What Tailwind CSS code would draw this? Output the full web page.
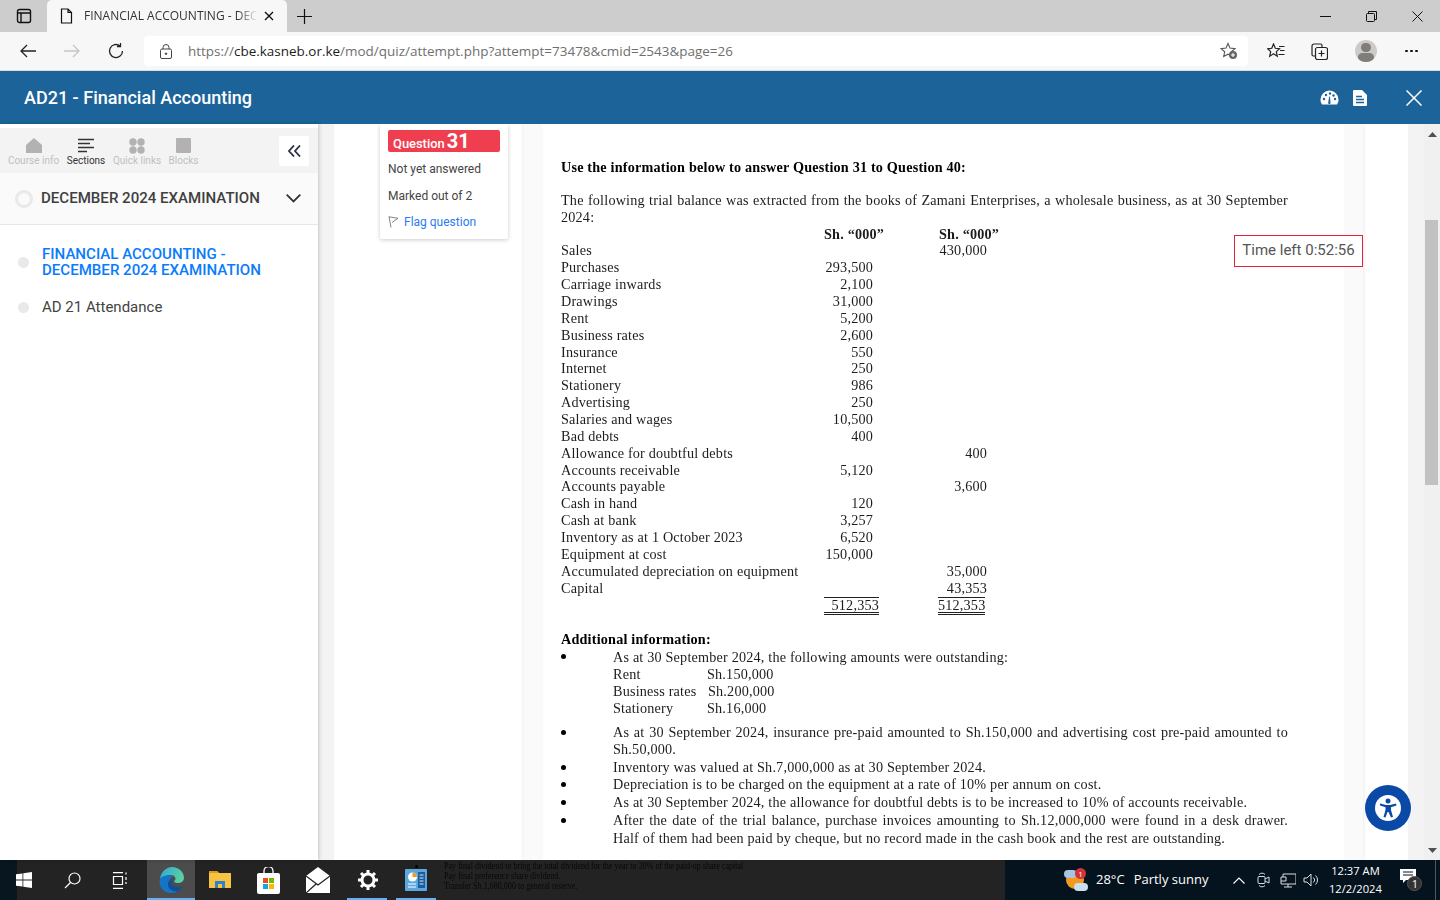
<!DOCTYPE html>
<html><head><meta charset="utf-8"><script src="https://cdn.jsdelivr.net/npm/@tailwindcss/browser@4"></script></head>
<body class="w-[1440px] h-[900px] overflow-hidden bg-white font-['Roboto',sans-serif]">
<div class="relative flex flex-col w-[1440px] h-[900px] overflow-hidden">

<!-- tab strip -->
<div class="flex items-end h-[32px] bg-[#cdcdcd] shrink-0">
  <div class="w-[47px] h-full flex items-center justify-center">
    <svg width="16" height="16" viewBox="0 0 16 16" fill="none" stroke="#111" stroke-width="1.4"><rect x="1.5" y="1.5" width="13" height="13" rx="2"/><path d="M1.5 5h13M5 5v9.5" /></svg>
  </div>
  <div class="w-[240px] h-[32px] bg-[#f7f7f7] rounded-t-[5px] flex items-center pl-[13px]">
    <svg width="13" height="16" viewBox="0 0 13 16" fill="none" stroke="#111" stroke-width="1.2"><path d="M1.5 1h6.5l3.5 3.5V15h-10zM8 1v3.5h3.5"/></svg>
    <span class="ml-[11px] w-[174px] whitespace-nowrap text-[12px] text-[#333] font-['Open_Sans',sans-serif] [mask-image:linear-gradient(to_right,black_88%,transparent)]">FINANCIAL ACCOUNTING - DECE</span>
    <svg class="ml-[6px]" width="10" height="10" viewBox="0 0 10 10" stroke="#111" stroke-width="1.4"><path d="M1 1l8 8M9 1l-8 8"/></svg>
  </div>
  <div class="w-[34px] h-full flex items-center justify-center">
    <svg width="15" height="15" viewBox="0 0 15 15" stroke="#111" stroke-width="1.2"><path d="M7.5 0v15M0 7.5h15"/></svg>
  </div>
  <div class="flex-1"></div>
  <div class="flex h-full items-center pr-[17px] gap-[35px]">
    <svg width="11" height="11" viewBox="0 0 11 11" stroke="#111" stroke-width="1"><path d="M0 5.5h11"/></svg>
    <svg width="11" height="11" viewBox="0 0 11 11" fill="none" stroke="#111" stroke-width="1"><rect x="0.5" y="2.5" width="8" height="8" rx="1"/><path d="M2.5 2.5V.5h8v8h-2"/></svg>
    <svg width="11" height="11" viewBox="0 0 11 11" stroke="#111" stroke-width="1"><path d="M.5.5l10 10M10.5.5l-10 10"/></svg>
  </div>
</div>

<!-- toolbar -->
<div class="flex items-center h-[39px] bg-[#f7f7f7] border-b border-[#dcdcdc] shrink-0">
  <div class="w-[144px] flex items-center pl-[20px] gap-[28px]">
    <svg width="16" height="14" viewBox="0 0 16 14" fill="none" stroke="#222" stroke-width="1.3"><path d="M16 7H1M7 1L1 7l6 6"/></svg>
    <svg width="16" height="14" viewBox="0 0 16 14" fill="none" stroke="#c6c6c6" stroke-width="1.3"><path d="M0 7h15M9 1l6 6-6 6"/></svg>
    <svg width="16" height="16" viewBox="0 0 16 16" fill="none" stroke="#222" stroke-width="1.3"><path d="M14.5 8A6.5 6.5 0 1 1 12 2.9M12.5 0v3.5H9"/></svg>
  </div>
  <div class="w-[1104px] h-[30px] bg-white rounded-[4px] flex items-center pl-[16px] pr-[10px]">
    <svg width="12" height="15" viewBox="0 0 12 15" fill="none" stroke="#444" stroke-width="1"><rect x="0.5" y="5" width="11" height="9.5" rx="1.5"/><path d="M3 5V3.5a3 3 0 0 1 6 0V5"/><circle cx="6" cy="9.7" r="0.8" fill="#444"/></svg>
    <span class="ml-[16px] text-[13.48px] text-[#6f6f6f] font-['Open_Sans',sans-serif] whitespace-nowrap">https://<span class="text-[#1c1c1c]">cbe.kasneb.or.ke</span>/mod/quiz/attempt.php?attempt=73478&amp;cmid=2543&amp;page=26</span>
    <div class="flex-1"></div>
    <svg width="18" height="18" viewBox="0 0 18 18"><path d="M8 1.5l2 4.6 5 .5-3.7 3.2 1 4.7L8 12.2l-4.3 2.3 1-4.7L1 6.600l5-.5z" fill="none" stroke="#555" stroke-width="1.1"/><circle cx="13" cy="13" r="4" fill="#666"/><path d="M13 11v4M11 13h4" stroke="#fff" stroke-width="1.1"/></svg>
  </div>
  <div class="flex-1 flex items-center pl-[19px]">
    <svg width="18" height="17" viewBox="0 0 18 17" fill="none" stroke="#222" stroke-width="1.2"><path d="M6.500 1l1.800 4.300 4.200.4-3.200 2.900 1 4.700-3.800-2.500L2.700 13.300l1-4.700L.6 5.700l4.200-.4zM12 3.500h5.500M13 7.500h4.500M11.500 11.500h6"/></svg>
    <svg class="ml-[26px]" width="17" height="17" viewBox="0 0 17 17" fill="none" stroke="#222" stroke-width="1.2"><path d="M4 13H2.500A1.500 1.500 0 0 1 1 11.500V3a2 2 0 0 1 2-2h6.500A1.500 1.500 0 0 1 11 2.500V4"/><rect x="4.500" y="4.500" width="12" height="12" rx="2"/><path d="M10.500 7.500v6M7.500 10.500h6"/></svg>
    <div class="ml-[27px] w-[22px] h-[22px] rounded-full bg-[#cdcbc8] overflow-hidden flex flex-col items-center">
      <div class="mt-[3px] w-[10px] h-[10px] rounded-full bg-[#807d7a]"></div>
      <div class="mt-[1px] w-[16px] h-[10px] rounded-full bg-[#807d7a]"></div>
    </div>
    <div class="ml-[28px] flex gap-[2.500px]"><span class="w-[2.500px] h-[2.500px] rounded-full bg-[#111]"></span><span class="w-[2.500px] h-[2.500px] rounded-full bg-[#111]"></span><span class="w-[2.500px] h-[2.500px] rounded-full bg-[#111]"></span></div>
  </div>
</div>

<!-- app header -->
<div class="flex items-center h-[53px] bg-[#1b6399] shrink-0 pl-[24px] pr-[18px]">
  <div class="text-[18px] font-medium text-white">AD21 - Financial Accounting</div>
  <div class="flex-1"></div>
  <svg width="19" height="15" viewBox="0 0 19 15"><path d="M9.500 0.500A9 9 0 0 0 .5 9.500c0 2 .5 3.500 1.500 5h15c1-1.500 1.500-3 1.500-5a9 9 0 0 0-9-9z" fill="#fff"/><g fill="#1b6399"><circle cx="4" cy="9" r="1.200"/><circle cx="6" cy="5" r="1.200"/><circle cx="10" cy="3.500" r="1.200"/><circle cx="15" cy="9" r="1.200"/><circle cx="13.500" cy="5.500" r="1.200"/><path d="M8.200 12.500l1-6h.8l.5 6a1.200 1.200 0 1 1-2.300 0z"/></g></svg>
  <svg class="ml-[14px]" width="14" height="16" viewBox="0 0 14 16"><path d="M1 0h8l5 5v10a1 1 0 0 1-1 1H1a1 1 0 0 1-1-1V1a1 1 0 0 1 1-1z" fill="#fff"/><path d="M3 6.500h6M3 9.500h8M3 12.500h8" stroke="#1b6399" stroke-width="1.500"/></svg>
  <svg class="ml-[39px]" width="16" height="16" viewBox="0 0 16 16" stroke="#fff" stroke-width="1.500"><path d="M.5.5l15 15M15.500.5l-15 15"/></svg>
</div>

<!-- main -->
<div class="flex flex-1 min-h-0 bg-white">
  <!-- sidebar -->
  <aside class="w-[318px] shrink-0 bg-white flex flex-col pt-[4px] shadow-[1px_0_4px_rgba(0,0,0,0.2)] z-10">
    <div class="h-[45px] bg-[#f3f3f3] flex items-start relative pt-[10px] pl-[8px] text-[10px] leading-[12px] text-[#c0bfbf] shrink-0">
      <div class="w-[51px] flex flex-col items-center">
        <svg width="16" height="15" viewBox="0 0 16 15"><path d="M8 0L0 7v8h16V7z" fill="#b3b1b2"/></svg>
        <span class="mt-[2px] whitespace-nowrap">Course info</span>
      </div>
      <div class="ml-[8px] w-[38px] flex flex-col items-center text-[#333]">
        <svg width="16" height="15" viewBox="0 0 16 15" stroke="#333" stroke-width="1.600"><path d="M0 1.500h16M0 5.500h12M0 9.500h16M0 13.500h9"/></svg>
        <span class="mt-[2px] whitespace-nowrap">Sections</span>
      </div>
      <div class="ml-[8px] w-[48px] flex flex-col items-center">
        <svg width="16" height="16" viewBox="0 0 16 16" fill="#b3b1b2"><circle cx="4" cy="4" r="3.700"/><circle cx="12" cy="4" r="3.700"/><circle cx="4" cy="12" r="3.700"/><circle cx="12" cy="12" r="3.700"/></svg>
        <span class="mt-[1px] whitespace-nowrap">Quick links</span>
      </div>
      <div class="ml-[8px] w-[29px] flex flex-col items-center">
        <div class="w-[15px] h-[15px] bg-[#b3b1b2] rounded-[1px]"></div>
        <span class="mt-[2px] whitespace-nowrap">Blocks</span>
      </div>
      <div class="absolute left-[279px] top-[8px] w-[30px] h-[30px] bg-white rounded-[2px] flex items-center justify-center">
        <svg width="13" height="12" viewBox="0 0 13 12" fill="none" stroke="#2a3142" stroke-width="1.800"><path d="M6 .5L1 6l5 5.500M12 .5L7 6l5 5.500"/></svg>
      </div>
    </div>
    <div class="h-[52px] bg-[#fafafa] border-b border-[#e6e6e6] flex items-center pl-[15px] shrink-0">
      <span class="w-[18px] h-[18px] rounded-full border-[3px] border-[#e9e9e9]"></span>
      <span class="ml-[8px] text-[15.07px] font-medium text-[#3f3f3f] whitespace-nowrap">DECEMBER 2024 EXAMINATION</span>
      <svg class="ml-[26px]" width="15" height="9" viewBox="0 0 15 9" fill="none" stroke="#333" stroke-width="1.800"><path d="M.7.7l6.800 6.800L14.300.7"/></svg>
    </div>
    <div class="pt-[21px]">
      <div class="flex items-center pl-[18px]">
        <span class="w-[11px] h-[11px] rounded-full bg-[#e9e9e9]"></span>
        <span class="ml-[13px] text-[15.07px] leading-[16px] font-medium text-[#0a7cfb]">FINANCIAL ACCOUNTING -<br>DECEMBER 2024 EXAMINATION</span>
      </div>
      <div class="flex items-center pl-[18px] mt-[20px]">
        <span class="w-[11px] h-[11px] rounded-full bg-[#e9e9e9]"></span>
        <span class="ml-[13px] text-[15px] leading-[18px] text-[#444]">AD 21 Attendance</span>
      </div>
    </div>
  </aside>
  <div class="w-[16px] shrink-0 bg-[#f3f3f3]"></div>

  <!-- content -->
  <div class="relative flex-1 flex min-w-0 bg-white pl-[46px] overflow-hidden">
    <div class="w-[128px] h-[115px] shrink-0 bg-white shadow-[0_1px_4px_rgba(0,0,0,0.2)] rounded-b-[2px] px-[8px] pt-[6px]">
      <div class="h-[22px] bg-[#ef3e50] rounded-[2px] pl-[5px] flex items-center text-white font-medium">
        <span class="text-[12.9px] mt-[5px]">Question</span><span class="ml-[2px] text-[20px] leading-[20px] font-bold">31</span>
      </div>
      <div class="mt-[9px] text-[12px] leading-[16px] text-[#444]">Not yet answered</div>
      <div class="mt-[11px] text-[12px] leading-[16px] text-[#444]">Marked out of 2</div>
      <div class="mt-[10px] text-[12px] leading-[16px] text-[#2a7bf0] flex items-center">
        <svg width="11" height="12" viewBox="0 0 11 12" fill="none" stroke="#777" stroke-width="0.900"><path d="M1 .5l2 11M1 .8l9 1.500-6 4.200"/></svg>
        <span class="ml-[5px]">Flag question</span>
      </div>
    </div>

    <div class="ml-[16px] w-[839px] h-full shrink-0 bg-[#fafafa] shadow-[0_0_4px_rgba(0,0,0,0.12)] px-[19px]">
      <div class="h-full bg-white pl-[18px] pt-[35px] font-['Liberation_Serif',serif] text-[14.200px] leading-[16.860px] text-[#1c1c1c] blur-[0.35px] tracking-[0.19px] overflow-hidden">
        <div class="font-bold text-black">Use the information below to answer Question 31 to Question 40:</div>
        <div class="mt-[16px] w-[727px] text-justify">The following trial balance was extracted from the books of Zamani Enterprises, a wholesale business, as at 30 September 2024:</div>
        <div class="flex font-bold"><span class="ml-[263px] w-[115px]">Sh. “000”</span><span>Sh. “000”</span></div>
        <div class="grid grid-cols-[263px_49px_126px] [&>div:nth-child(3n+2)]:text-right [&>div:nth-child(3n)]:text-right [&>div]:whitespace-nowrap">
          <div>Sales</div><div></div><div class="pr-[12px]">430,000</div>
          <div>Purchases</div><div>293,500</div><div></div>
          <div>Carriage inwards</div><div>2,100</div><div></div>
          <div>Drawings</div><div>31,000</div><div></div>
          <div>Rent</div><div>5,200</div><div></div>
          <div>Business rates</div><div>2,600</div><div></div>
          <div>Insurance</div><div>550</div><div></div>
          <div>Internet</div><div>250</div><div></div>
          <div>Stationery</div><div>986</div><div></div>
          <div>Advertising</div><div>250</div><div></div>
          <div>Salaries and wages</div><div>10,500</div><div></div>
          <div>Bad debts</div><div>400</div><div></div>
          <div>Allowance for doubtful debts</div><div></div><div class="pr-[12px]">400</div>
          <div>Accounts receivable</div><div>5,120</div><div></div>
          <div>Accounts payable</div><div></div><div class="pr-[12px]">3,600</div>
          <div>Cash in hand</div><div>120</div><div></div>
          <div>Cash at bank</div><div>3,257</div><div></div>
          <div>Inventory as at 1 October 2023</div><div>6,520</div><div></div>
          <div>Equipment at cost</div><div>150,000</div><div></div>
          <div>Accumulated depreciation on equipment</div><div></div><div class="pr-[12px]">35,000</div>
          <div>Capital</div><div></div><div class="pr-[12px]">43,353</div>
        </div>
        <div class="flex h-[17px] mt-[1px]">
          <div class="ml-[263px] w-[55px] border-t border-[#222] border-b-[3px] border-double text-right leading-[14px] box-border h-[18px]">512,353</div>
          <div class="ml-[59px] w-[47px] border-t border-[#222] border-b-[3px] border-double text-right leading-[14px] box-border h-[18px]">512,353</div>
        </div>
        <div class="mt-[17px] font-bold text-black">Additional information:</div>
        <div class="relative pl-[52px] mt-[1px]">
          <span class="absolute left-0 top-[5px] w-[5px] h-[5px] rounded-full bg-black"></span>
          <div>As at 30 September 2024, the following amounts were outstanding:</div>
          <div class="flex"><span class="w-[94px]">Rent</span><span>Sh.150,000</span></div>
          <div class="flex"><span class="w-[95px]">Business rates</span><span>Sh.200,000</span></div>
          <div class="flex"><span class="w-[94px]">Stationery</span><span>Sh.16,000</span></div>
        </div>
        <div class="relative pl-[52px] mt-[7px] w-[727px] text-justify">
          <span class="absolute left-0 top-[6px] w-[5px] h-[5px] rounded-full bg-black"></span>
          As at 30 September 2024, insurance pre-paid amounted to Sh.150,000 and advertising cost pre-paid amounted to Sh.50,000.
        </div>
        <div class="relative pl-[52px] mt-[1px]"><span class="absolute left-0 top-[6px] w-[5px] h-[5px] rounded-full bg-black"></span>Inventory was valued at Sh.7,000,000 as at 30 September 2024.</div>
        <div class="relative pl-[52px] mt-[1px]"><span class="absolute left-0 top-[6px] w-[5px] h-[5px] rounded-full bg-black"></span>Depreciation is to be charged on the equipment at a rate of 10% per annum on cost.</div>
        <div class="relative pl-[52px] mt-[1px]"><span class="absolute left-0 top-[6px] w-[5px] h-[5px] rounded-full bg-black"></span>As at 30 September 2024, the allowance for doubtful debts is to be increased to 10% of accounts receivable.</div>
        <div class="relative pl-[52px] mt-[1px] w-[727px] text-justify leading-[17.8px]"><span class="absolute left-0 top-[6px] w-[5px] h-[5px] rounded-full bg-black"></span>After the date of the trial balance, purchase invoices amounting to Sh.12,000,000 were found in a desk drawer. Half of them had been paid by cheque, but no record made in the cash book and the rest are outstanding.</div>
      </div>
    </div>
    <div class="w-[45px] shrink-0"></div>
    <div class="w-[16px] shrink-0 bg-[#f3f3f3]"></div>

    <!-- overlays -->
    <div class="absolute left-[900px] top-[111px] w-[129px] h-[32px] pb-[2px] bg-white border border-[#e0233f] flex items-center justify-center text-[15px] text-[#555] whitespace-nowrap">Time left 0:52:56</div>
    <div class="absolute left-[1031px] top-[661px] w-[46px] h-[46px] rounded-full bg-[#0a4aa6] flex items-center justify-center shadow-[0_0_2px_rgba(255,255,255,0.8)]">
      <div class="w-[26px] h-[26px] rounded-full bg-white flex items-center justify-center">
        <svg width="18" height="20" viewBox="0 0 18 20" fill="#0a4aa6"><circle cx="9" cy="3" r="2.500"/><path d="M1 5.500l6 1.500h4l6-1.500.5 2-5.500 1.700V12l2 7-2 .6L9.500 14h-1L6.500 19.600l-2-.6 2-7V9.200L1 7.500z"/></svg>
      </div>
    </div>
  </div>

  <!-- scrollbar -->
  <div class="w-[16px] shrink-0 bg-[#f0f0f0] flex flex-col items-center relative">
    <svg class="mt-[8px]" width="9" height="5" viewBox="0 0 9 5" fill="#505050"><path d="M4.500 0L9 5H0z"/></svg>
    <div class="absolute left-[1px] top-[96px] w-[13px] h-[265px] bg-[#c1c1c1]"></div>
    <svg class="absolute bottom-[7px]" width="9" height="5" viewBox="0 0 9 5" fill="#505050"><path d="M4.500 5L9 0H0z"/></svg>
  </div>
</div>

<!-- taskbar -->
<div class="relative flex items-center h-[40px] shrink-0 bg-[#232323] text-white">
  <div class="absolute inset-y-0 left-0 w-[17px] bg-[#07161f]"></div>
  <div class="absolute inset-y-0 left-[1005px] right-0 bg-[#05131e]"></div>
  <div class="absolute left-[444px] top-[1px] font-['Liberation_Serif',serif] text-[9.500px] leading-[10px] text-black blur-[0.3px] whitespace-nowrap opacity-80 origin-left scale-x-[0.85]">Pay final dividend to bring the total dividend for the year to 20% of the paid-up share capital<br>Pay final preference share dividend.<br>Transfer Sh.1,680,000 to general reserve.</div>
  <span class="absolute left-[415px] top-[5px] w-[3px] h-[3px] rounded-full bg-black"></span>

  <div class="relative flex items-center h-full">
    <div class="w-[48px] flex justify-center">
      <svg width="16" height="16" viewBox="0 0 16 16" fill="#fff"><path d="M0 2.300l6.500-.9v6.200H0zM7.300 1.300L16 0v7.600H7.300zM0 8.400h6.500v6.200L0 13.700zM7.300 8.400H16V16l-8.700-1.300z"/></svg>
    </div>
    <div class="w-[48px] flex justify-center">
      <svg width="17" height="17" viewBox="0 0 17 17" fill="none" stroke="#fff" stroke-width="1.200"><circle cx="10.500" cy="6.500" r="5.500"/><path d="M6.500 10.500L1 16"/></svg>
    </div>
    <div class="w-[48px] mr-[3px] flex justify-center">
      <svg width="16" height="17" viewBox="0 0 16 17" fill="none" stroke="#fff" stroke-width="1.200"><path d="M1 .6h10M1 16.400h10M1.500 4.500h9v8h-9zM14 .6v2M14 5v3M14 10v2"/></svg>
    </div>
    <div class="w-[48px] h-full bg-[#4c4c4c] relative flex justify-center items-center mr-[1px]">
      <svg width="25" height="26" viewBox="0 0 25 26"><defs><linearGradient id="e" x1="0" y1="0" x2="1" y2="0.300"><stop offset="0" stop-color="#2fa6d8"/><stop offset="1" stop-color="#5ad0a0"/></linearGradient></defs><path d="M1 12C2 4 8 0 13 0c7 0 12 5 12 11 0 3-3 5-6 5-2 0-4-.6-4-2 2-1 2-3 0-5-3-2-7-1-9 1-2 1-4 2-5 2z" fill="url(#e)"/><path d="M1 12c-2 8 4 14 11 14 3 0 5-1 7-2-5 1-10-2-10-7 0-3 2-6 6-8-5-2-13 0-14 3z" fill="#1574c8"/><path d="M9 17c0 5 5 8 10 7 2-1 4-3 5-5-3 2-8 2-11-1-1-1-1-3 2-4-4-1-6 1-6 3z" fill="#0c4f9e"/></svg>
      <div class="absolute bottom-0 inset-x-0 h-[2px] bg-[#68b0f5]"></div>
    </div>
    <div class="w-[48px] flex justify-center">
      <svg width="22" height="20" viewBox="0 0 22 20"><path d="M0 1h8l2 2h12v15H0z" fill="#f6c342"/><path d="M0 1h8l2 2H0z" fill="#d79b1e"/><path d="M6 11h10v7H6z" fill="#2f81c9"/><path d="M9 14h4v4H9z" fill="#f6c342"/></svg>
    </div>
    <div class="w-[49px] flex justify-center">
      <svg width="23" height="27" viewBox="0 0 23 27"><path d="M7 7V4a4 4 0 0 1 9 0v3" fill="none" stroke="#fff" stroke-width="1.300"/><rect x="0" y="6" width="23" height="21" rx="2" fill="#fff"/><rect x="6" y="11" width="5" height="5" fill="#e8501f"/><rect x="12" y="11" width="5" height="5" fill="#7ab800"/><rect x="6" y="17" width="5" height="5" fill="#12a5e8"/><rect x="12" y="17" width="5" height="5" fill="#fdb900"/></svg>
    </div>
    <div class="w-[50px] flex justify-center">
      <svg width="24" height="26" viewBox="0 0 24 26"><path d="M12 0l12 9v17H0V9z" fill="#fff"/><path d="M0 9l12 9 12-9M0 26l10-9" fill="none" stroke="#232323" stroke-width="1.300"/></svg>
    </div>
    <div class="w-[49px] h-full flex justify-center items-center relative">
      <svg width="20" height="20" viewBox="0 0 20 20"><circle cx="10" cy="10" r="6" fill="none" stroke="#fff" stroke-width="3"/><path d="M10 0v4M10 16v4M0 10h4M16 10h4M3 3l3 3M14 14l3 3M17 3l-3 3M6 14l-3 3" stroke="#fff" stroke-width="3"/></svg>
      <div class="absolute bottom-0 left-[4px] right-[5px] h-[2px] bg-[#68b0f5]"></div>
    </div>
    <div class="w-[40px] ml-[4px] h-full flex justify-center items-center relative">
      <svg width="22" height="22" viewBox="0 0 22 22"><rect width="22" height="22" rx="1" fill="#5aa7e2"/><circle cx="7.500" cy="8" r="4.500" fill="#fff"/><path d="M7.500 8V3.500A4.500 4.500 0 0 1 12 8z" fill="#ef9a2a"/><path d="M3 15h8M3 18h8" stroke="#fff" stroke-width="1.200"/><rect x="13" y="3" width="7" height="16" fill="#1d5c96"/><path d="M14.500 6h4M14.500 9h4M14.500 12h4M14.500 15h4" stroke="#cfe6f7" stroke-width="1.200"/></svg>
      <div class="absolute bottom-0 inset-x-0 h-[2px] bg-[#68b0f5]"></div>
    </div>
  </div>

  <!-- tray -->
  <div class="absolute inset-y-0 left-[1062px] right-0 flex items-center font-['Open_Sans',sans-serif]">
    <div class="relative w-[26px] h-[24px]">
      <div class="absolute left-[4px] top-[3px] w-[18px] h-[18px] rounded-full bg-[#f39a1c]"></div>
      <div class="absolute left-[2px] top-[2px] w-[13px] h-[8px] rounded-full bg-[#a8c4e0]"></div>
      <div class="absolute left-[12px] top-[15px] w-[14px] h-[8px] rounded-full bg-[#c9dff2]"></div>
      <div class="absolute left-[13px] top-[0px] w-[11px] h-[11px] rounded-full bg-[#d13438] text-[8px] leading-[11px] text-center">1</div>
    </div>
    <span class="ml-[8px] text-[13px] whitespace-nowrap">28°C</span>
    <span class="ml-[9px] text-[13px] whitespace-nowrap">Partly sunny</span>
    <svg class="ml-[25px]" width="12" height="7" viewBox="0 0 12 7" fill="none" stroke="#fff" stroke-width="1.200"><path d="M.5 6.500L6 1l5.500 5.500"/></svg>
    <svg class="ml-[12px]" width="13" height="16" viewBox="0 0 13 16" fill="none" stroke="#ddd" stroke-width="1"><rect x="1" y="4.500" width="7" height="7" rx="1"/><path d="M8 7l4-2v6l-4-2M2 2.500a4 4 0 0 1 6 0M2 13.500a4 4 0 0 0 6 0"/></svg>
    <svg class="ml-[10px]" width="16" height="15" viewBox="0 0 16 15" fill="none" stroke="#ddd" stroke-width="1"><path d="M3 4V1h13v10H1V4h5v4H1M8 11v3M4 14h8"/></svg>
    <svg class="ml-[7px]" width="16" height="14" viewBox="0 0 16 14" fill="none" stroke="#ddd" stroke-width="1"><path d="M1 5h3l4-4v12l-4-4H1zM10.500 4.500a3.500 3.500 0 0 1 0 5M12.500 2.500a6 6 0 0 1 0 9" /></svg>
    <div class="ml-[1px] w-[70px] text-center text-[11.200px] leading-[18px] whitespace-nowrap">12:37 AM<br>12/2/2024</div>
    <div class="relative ml-[10px] w-[22px] h-[24px]">
      <svg width="17" height="17" viewBox="0 0 17 17" fill="#fff"><path d="M0 1h16v11H6l-3 3v-3H0z"/><path d="M3 4h10M3 7h10" stroke="#05131e" stroke-width="1"/></svg>
      <div class="absolute left-[7px] top-[8px] w-[15px] h-[15px] rounded-full bg-[#333] border border-[#555] text-[11px] leading-[13px] text-center">1</div>
    </div>
    <div class="absolute right-[4px] inset-y-0 w-px bg-[#555]"></div>
  </div>
</div>
</div>
</body></html>
